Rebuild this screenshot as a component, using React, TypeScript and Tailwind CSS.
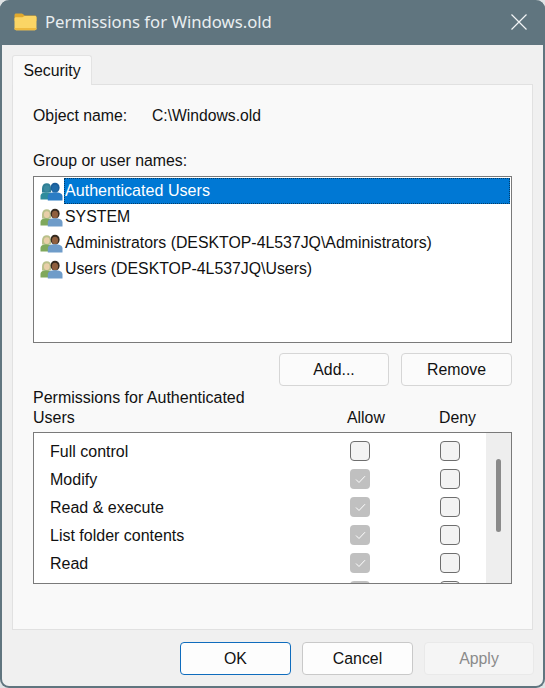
const font = "font-['Liberation_Sans',Arial,sans-serif]";

function Folder() {
  return (
    <svg width="23" height="18" viewBox="0 0 23 18" className="shrink-0">
      <path d="M0.5 2.2C0.5 1.2 1.2 0.5 2.2 0.5H7.6C8.2 0.5 8.7 0.8 9.2 1.2L10.6 2.6H20.8C21.8 2.6 22.5 3.3 22.5 4.3V8H0.5Z" fill="#e0a92e" />
      <path d="M0.5 5.6C0.5 4.8 1.2 4.2 2 4.2H8.4L10.6 2.9H21C21.9 2.9 22.5 3.6 22.5 4.4V15.6C22.5 16.6 21.8 17.3 20.8 17.3H2.2C1.2 17.3 0.5 16.6 0.5 15.6Z" fill="#fbd565" />
      <path d="M0.5 15H22.5V15.6C22.5 16.6 21.8 17.3 20.8 17.3H2.2C1.2 17.3 0.5 16.6 0.5 15.6Z" fill="#eeb93e" />
    </svg>
  );
}

function Users({ selected }: { selected?: boolean }) {
  const lh = selected ? "#2f7f95" : "#b9c08a";
  const ls = selected ? "#2f8c9c" : "#7fa85c";
  const lf = selected ? "#3b8aa0" : "#e8cfa8";
  const rh = selected ? "#1b5e9a" : "#33291f";
  const rf = selected ? "#1f6aa8" : "#8f5f3e";
  const rs = selected ? "#2a7cc4" : "#6f9cc9";
  return (
    <svg width="23" height="19" viewBox="0 0 23 19" className="shrink-0">
      <path d="M2 6.5C2 3 4 1.2 6.8 1.2S11 3 11 6.5V10.5H2Z" fill={lh} />
      <ellipse cx="6.8" cy="6.6" rx="2.9" ry="3.4" fill={lf} />
      <path d="M0.5 17.5V14C0.5 11.5 3 10.2 6.5 10.2S12 11.5 12 14V17.5Z" fill={ls} />
      <path d="M10.6 5.5C10.6 2.5 12.5 0.8 15 0.8S19.6 2.5 19.6 5.5C19.6 8.6 17.6 10.6 15 10.6S10.6 8.6 10.6 5.5Z" fill={rh} />
      <ellipse cx="15" cy="6.4" rx="3.1" ry="3.6" fill={rf} />
      <path d="M7.8 18.5V14.5C7.8 11.5 11 10.2 15 10.2S22.5 11.5 22.5 14.5V18.5Z" fill={rs} />
    </svg>
  );
}

function UserRow({ name, selected }: { name: string; selected?: boolean }) {
  return (
    <div className="flex h-[26px] items-center pl-[6px]">
      <Users selected={selected} />
      <div className={selected ? "ml-[1px] flex h-[26px] flex-1 items-center bg-[#0078d4] pb-[2px] pl-[1px] text-[16.1px] text-white outline-1 -outline-offset-1 outline-dotted outline-[#003c6a]" : "ml-[2px]"}>
        {name}
      </div>
    </div>
  );
}

function Check({ on }: { on?: boolean }) {
  if (on) {
    return (
      <div className="flex h-5 w-5 items-center justify-center rounded-[4px] bg-[#c0c0c0]">
        <svg width="11" height="9" viewBox="0 0 11 9" fill="none" stroke="#ffffff" strokeWidth="1">
          <path d="M1 4.5L4 7.5L10 1.2" />
        </svg>
      </div>
    );
  }
  return <div className="h-5 w-5 rounded-[4px] border border-[#6e6e6e] bg-[#f3f3f3]" />;
}

function PermRow({ name, allow }: { name: string; allow?: boolean }) {
  return (
    <div className="flex h-7 shrink-0 items-center">
      <div className="w-[316px] pl-[16px] pt-[1px] text-[16px]">{name}</div>
      <Check on={allow} />
      <div className="w-[70px]" />
      <Check />
    </div>
  );
}

function Btn({ children, className }: { children: React.ReactNode; className: string }) {
  return (
    <div className={`flex h-[33px] items-center justify-center rounded-[4px] border ${className}`}>{children}</div>
  );
}

export default function App() {
  return (
    <div className={`${font} h-[688px] w-[545px] overflow-hidden bg-[#dfe3e5] text-[15.85px] leading-[20px] text-[#111111]`}>
      <div className="flex h-full flex-col rounded-[9px] border-x-2 border-b-2 border-[#60757f] bg-[#f0f0f0]">
        <div className="-mx-[2px] flex h-[45px] shrink-0 items-center rounded-t-[9px] bg-[#60757f] pb-[1px] pl-[14px] pr-[18px]">
          <Folder />
          <span className="ml-2 font-['Noto_Sans',sans-serif] text-[16.7px] text-[#e9eef0]">Permissions for Windows.old</span>
          <svg width="16" height="16" viewBox="0 0 16 16" className="ml-auto" stroke="#f2f5f6" strokeWidth="1.2">
            <path d="M0.5 0.5L15.5 15.5M15.5 0.5L0.5 15.5" />
          </svg>
        </div>

        <div className="flex flex-1 flex-col px-[10px] pt-[10px]">
          <div className="relative z-10 -mb-px flex h-[30px] w-[80px] items-center justify-center rounded-t-[3px] border border-b-0 border-[#e3e3e3] bg-[#f9f9f9]">
            Security
          </div>

          <div className="flex h-[546px] flex-col border border-[#e1e1e1] bg-[#f9f9f9] px-5">
            <div className="mt-[21px] flex">
              <span className="w-[119px]">Object name:</span>
              <span className="text-[15.7px]">C:\Windows.old</span>
            </div>
            <div className="mt-[25px]">Group or user names:</div>
            <div className="mt-[5px] h-[167px] border border-[#7a7a7a] bg-white pt-[1px] pr-[1px]">
              <UserRow name="Authenticated Users" selected />
              <UserRow name="SYSTEM" />
              <UserRow name="Administrators (DESKTOP-4L537JQ\Administrators)" />
              <UserRow name="Users (DESKTOP-4L537JQ\Users)" />
            </div>
            <div className="mt-[10px] flex justify-end gap-3">
              <Btn className="w-[110px] border-[#d6d6d6] bg-[#fbfbfb]">Add...</Btn>
              <Btn className="w-[111px] border-[#d6d6d6] bg-[#fbfbfb]">Remove</Btn>
            </div>
            <div className="mt-[2px] flex items-end pb-[4px]">
              <div className="w-[314px] text-[16px]">
                <div>Permissions for Authenticated</div>
                <div>Users</div>
              </div>
              <span className="w-[92px]">Allow</span>
              <span>Deny</span>
            </div>
            <div className="flex h-[152px] overflow-hidden border border-[#7a7a7a] bg-white">
              <div className="flex flex-1 flex-col pt-[4px]">
                <PermRow name="Full control" />
                <PermRow name="Modify" allow />
                <PermRow name="Read &amp; execute" allow />
                <PermRow name="List folder contents" allow />
                <PermRow name="Read" allow />
                <PermRow name="" allow />
              </div>
              <div className="w-[25px] shrink-0 bg-[#eeeeee] pl-[10px] pt-[26px]">
                <div className="h-[73px] w-[5px] rounded-full bg-[#8a8a8a]" />
              </div>
            </div>
          </div>

          <div className="flex flex-1 items-start justify-end pt-[12px] -mr-[1px]">
            <Btn className="w-[111px] border-[#0f6cbd] bg-[#fdfdfd]">OK</Btn>
            <Btn className="ml-[11px] w-[111px] border-[#c9c9c9] bg-[#fdfdfd]">Cancel</Btn>
            <Btn className="ml-[11px] w-[110px] border-[#e9e9e9] bg-[#f5f5f5] text-[#8a8a8a]">Apply</Btn>
          </div>
        </div>
      </div>
    </div>
  );
}
